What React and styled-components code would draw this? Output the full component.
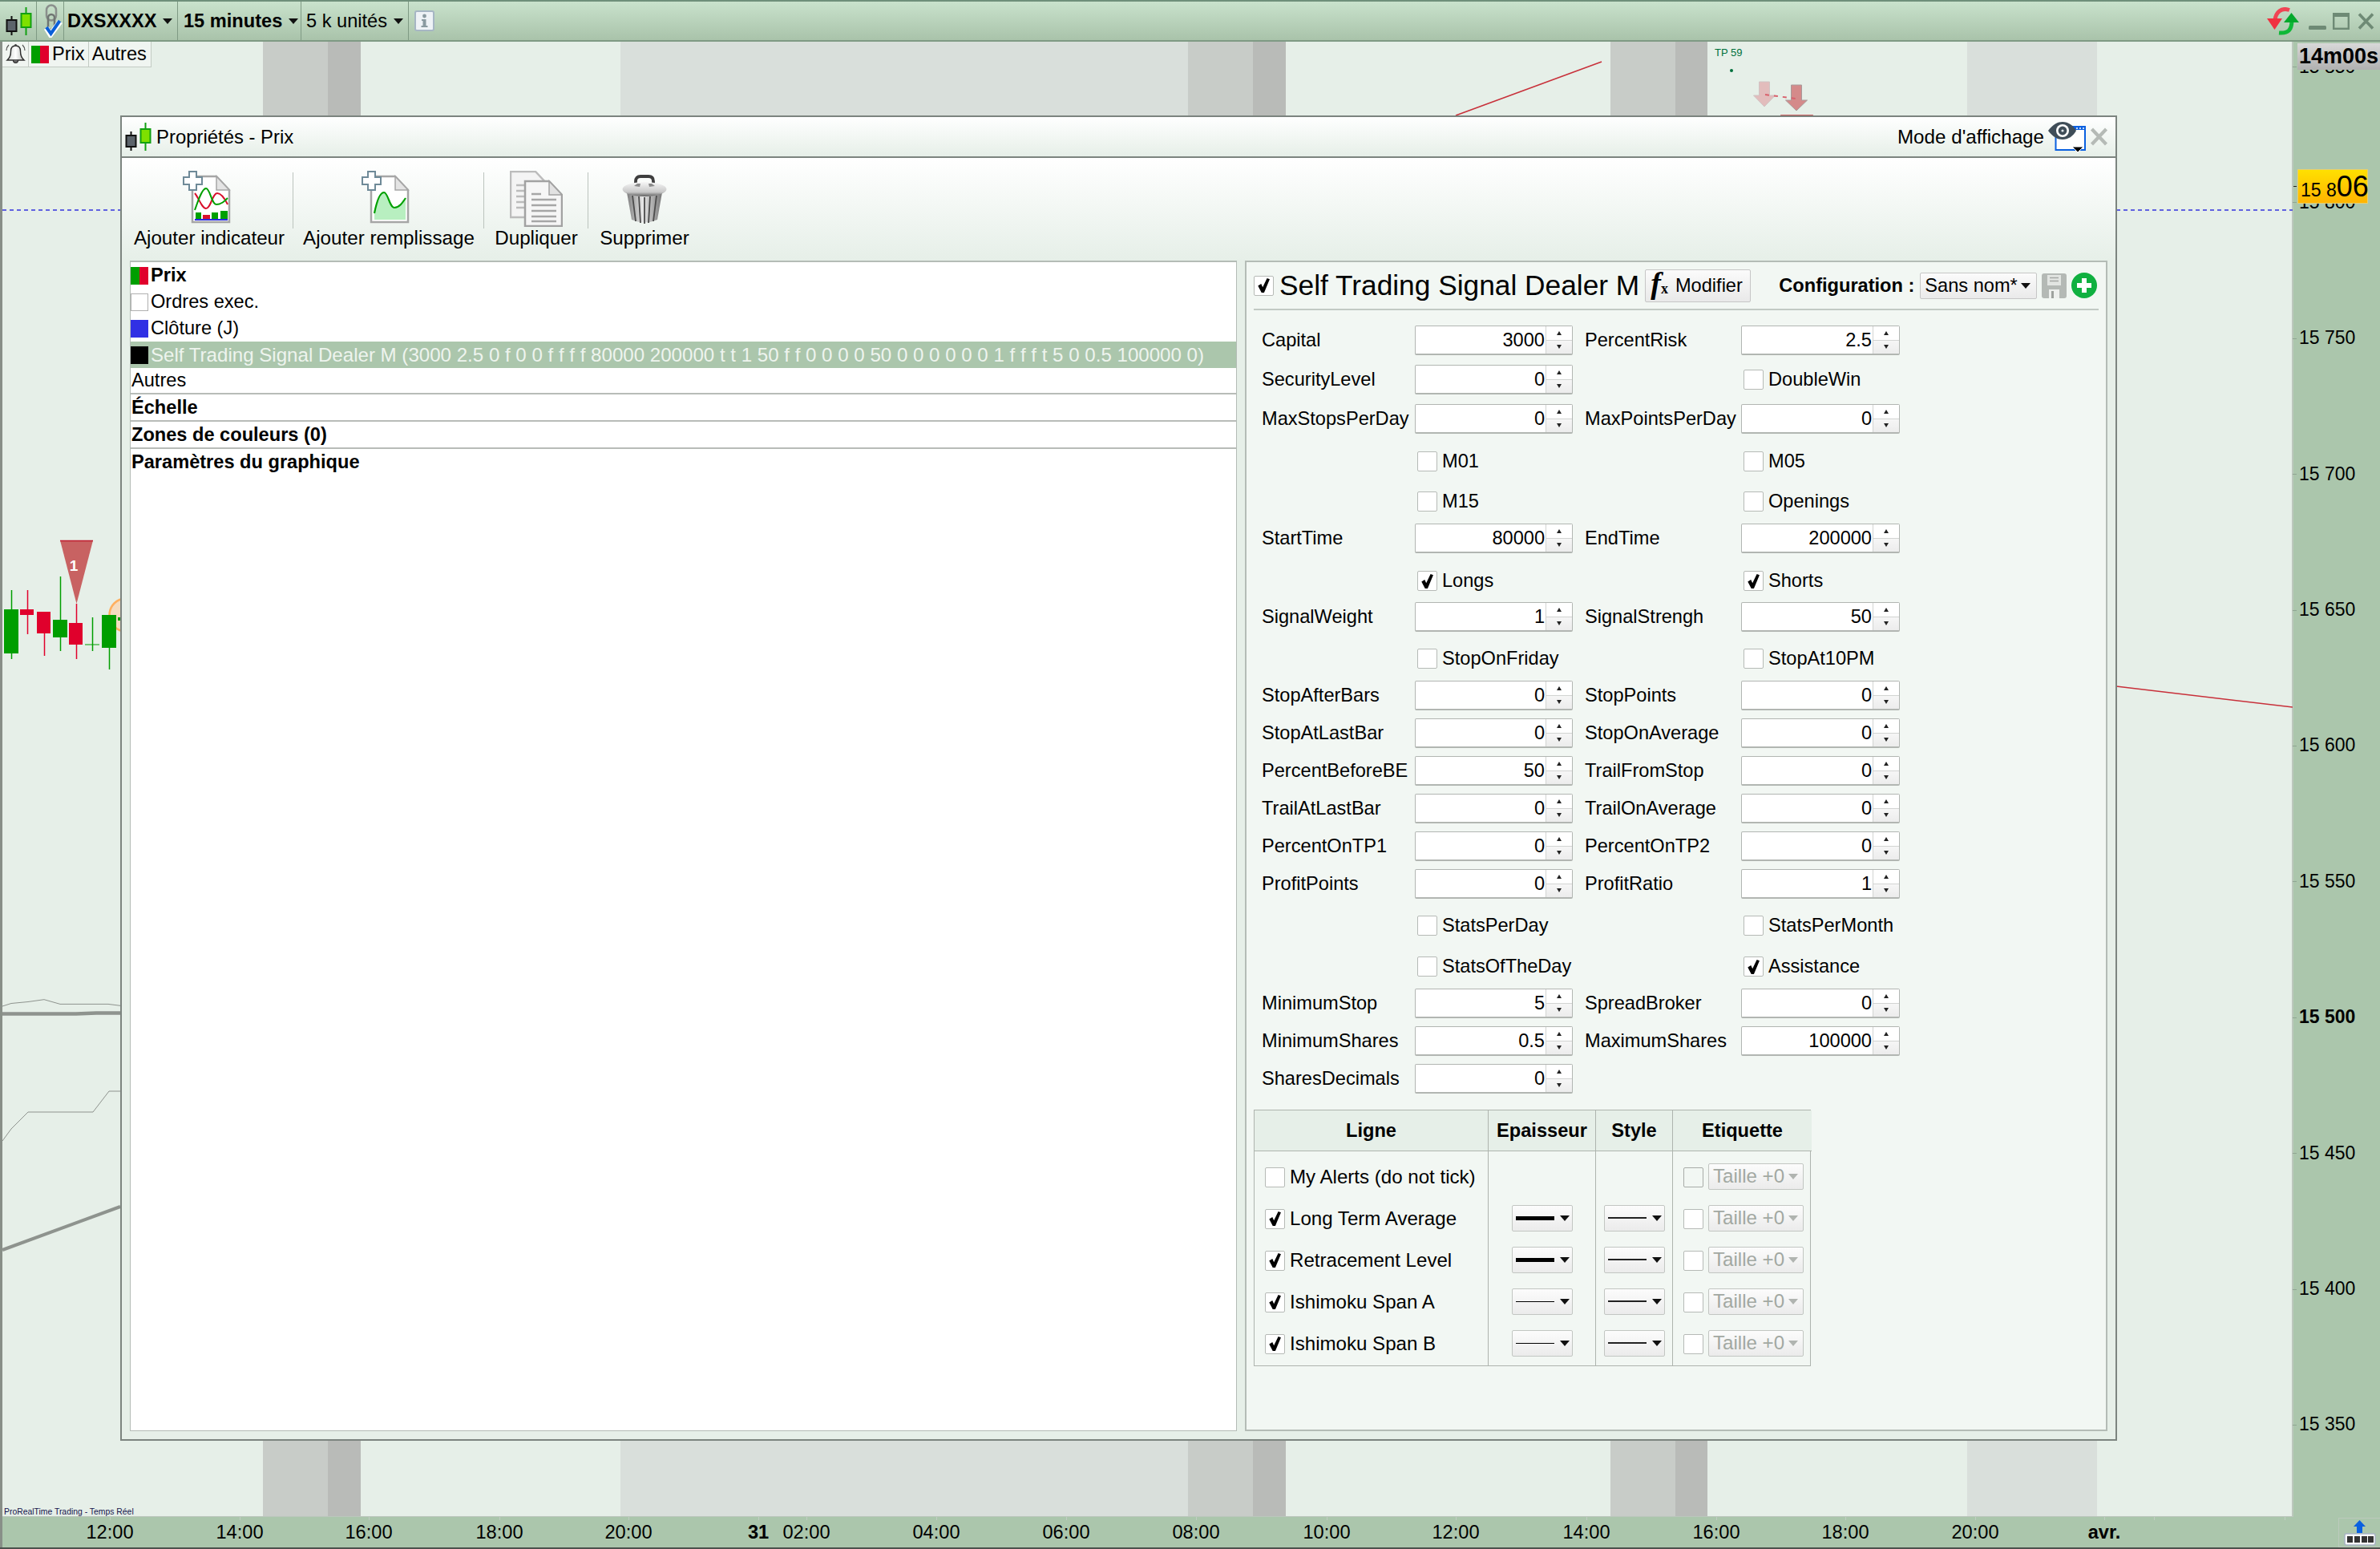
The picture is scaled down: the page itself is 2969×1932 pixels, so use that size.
import React from 'react';
import styled, {createGlobalStyle} from 'styled-components';

const GlobalStyle = createGlobalStyle`
  html, body {
    margin: 0;
    padding: 0;
    background: #e6efe8;
    overflow: hidden;
  }
  body {
    font-family: "Liberation Sans", Arial, sans-serif;
    font-size: 23.6px;
    color: #000;
  }
`;

const Page = styled.div`
  width: 2969px;
  height: 1932px;
  display: grid;
  grid-template-rows: 52px 1fr 40px;
  overflow: hidden;
`;

/* ---------- top toolbar ---------- */
const TopBar = styled.div`
  display: flex;
  align-items: stretch;
  box-sizing: border-box;
  border-top: 2px solid #6f8f7a;
  border-bottom: 2px solid #7f9a84;
  padding-left: 2px;
  background: linear-gradient(#c9e2cc, #a9c3aa);
`;

const TopSegment = styled.div`
  width: ${p => p.$w}px;
  box-sizing: border-box;
  display: flex;
  align-items: center;
  justify-content: ${p => (p.$center ? 'center' : 'flex-start')};
  padding-left: ${p => p.$pad || 0}px;
  border-right: 1px solid #7f9a84;
  font-weight: ${p => (p.$bold ? 700 : 400)};
  white-space: nowrap;
`;

const InfoSlot = styled.div`
  display: flex;
  align-items: center;
  padding-left: 7px;
`;

const WindowButtons = styled.div`
  margin-left: auto;
  display: flex;
  align-items: center;
  padding-right: 7px;
`;

const WindowGlyph = styled.svg`
  display: block;
  margin-left: ${p => p.$ml || 0}px;
`;

const Caret = styled.span`
  display: inline-block;
  width: 0;
  height: 0;
  flex: none;
  margin-left: ${p => p.$ml ?? 8}px;
  border-left: 6.5px solid transparent;
  border-right: 6.5px solid transparent;
  border-top: 7px solid ${p => p.$color || '#111'};
`;

/* ---------- chart ---------- */
const Main = styled.div`
  display: grid;
  grid-template-columns: 2860px 109px;
  min-height: 0;
`;

const Chart = styled.div`
  position: relative;
  overflow: hidden;
  background: #e6efe8;
`;

const ChartDrawing = styled.svg`
  position: absolute;
  left: 0;
  top: 0;
  display: block;
`;

const Legend = styled.div`
  position: absolute;
  left: 3px;
  top: 0;
  height: 31px;
  display: flex;
  background: #f0f5f1;
  border-right: 1px solid #c3cbc4;
  border-bottom: 1px solid #c3cbc4;
`;

const LegendCell = styled.div`
  display: flex;
  align-items: center;
  padding: 0 ${p => p.$pad ?? 5}px 0 ${p => p.$pl ?? 4}px;
  border-right: 1px solid #c3cbc4;
  &:last-child { border-right: 0; }
`;

const Swatch = styled.span`
  display: inline-block;
  flex: none;
  width: 22px;
  height: 22px;
  box-sizing: border-box;
  margin-right: ${p => p.$mr ?? 3}px;
  background: ${p => p.$bg};
  border: ${p => (p.$outlined ? '1px solid #b0b0b0' : '0')};
`;

const Credit = styled.div`
  position: absolute;
  left: 5px;
  top: 1827px;
  font-size: 10.4px;
  line-height: 14px;
  color: #14144c;
  white-space: nowrap;
`;

/* ---------- price scale ---------- */
const PriceAxis = styled.div`
  position: relative;
  overflow: hidden;
  background: #abc6ac;
  box-shadow: inset 1px 0 #bcc8bd;
`;

const PriceTicks = styled.div`
  margin-top: -53.7px;
`;

const PriceTick = styled.div`
  position: relative;
  height: 169.4px;
  display: flex;
  align-items: center;
  padding-left: 8px;
  font-size: 23px;
  font-weight: ${p => (p.$bold ? 700 : 400)};
  &::before {
    content: '';
    position: absolute;
    left: 0;
    top: 50%;
    width: 5px;
    height: 1px;
    background: #8fa592;
  }
`;

const TimerTag = styled.div`
  position: absolute;
  left: 6px;
  right: 0;
  top: 2px;
  height: 33px;
  display: flex;
  align-items: center;
  justify-content: center;
  font-size: 27px;
  font-weight: 700;
  white-space: nowrap;
  background: linear-gradient(#d8d8d8, #b0b0b0);
`;

const PriceTag = styled.div`
  position: absolute;
  left: 6px;
  top: 159px;
  width: 88px;
  height: 43px;
  box-sizing: border-box;
  display: flex;
  align-items: baseline;
  padding: 0 0 0 3px;
  line-height: 42px;
  white-space: nowrap;
  background: linear-gradient(#ffe000, #ffb400);
  border: 1px solid #e8d070;
  &::before {
    content: '';
    position: absolute;
    left: -6px;
    top: 20px;
    width: 4px;
    height: 1px;
    background: #222;
  }
`;

const PriceHead = styled.span`
  font-size: 23px;
`;

const PriceTail = styled.span`
  font-size: 36px;
`;

/* ---------- time scale ---------- */
const TimeAxis = styled.div`
  position: relative;
  box-sizing: border-box;
  background: #abc6ac;
  border-bottom: 2px solid #4c524d;
  box-shadow: inset 3px 0 #888f88;
`;

const TimeStamp = styled.div`
  position: absolute;
  left: ${p => p.$x}px;
  top: 19px;
  transform: translate(-50%, -50%);
  font-weight: ${p => (p.$bold ? 700 : 400)};
  white-space: nowrap;
`;

const TimeMark = styled.div`
  position: absolute;
  left: ${p => p.$x}px;
  top: 0;
  width: 1px;
  height: 4px;
  background: #c2cec3;
`;

const TrayButton = styled.div`
  position: absolute;
  right: 0;
  top: 1px;
  width: 52px;
  height: 37px;
  box-sizing: border-box;
  border: 1px solid #bccabc;
  border-right: 0;
  display: flex;
  justify-content: center;
`;

/* ---------- dialog ---------- */
const Dialog = styled.div`
  position: absolute;
  left: 150px;
  top: 92px;
  width: 2491px;
  height: 1653px;
  box-sizing: border-box;
  display: flex;
  flex-direction: column;
  border: 2px solid #7c847f;
  background: #e6efe8;
`;

const DialogTitle = styled.div`
  height: 51px;
  flex: none;
  box-sizing: border-box;
  display: flex;
  align-items: center;
  padding: 0 9px 0 3px;
  border-bottom: 2px solid #7c847f;
  background: linear-gradient(#fff, #e6efe8);
`;

const TitleText = styled.span`
  margin-left: 4px;
  font-size: 23.9px;
`;

const DisplayMode = styled.div`
  margin-left: auto;
  display: flex;
  align-items: center;
  gap: 5px;
  font-size: 24.2px;
`;

const ActionBar = styled.div`
  height: 128px;
  flex: none;
  box-sizing: border-box;
  display: flex;
  align-items: flex-start;
  padding: 16px 0 0 4px;
  background: linear-gradient(#fff, #e6efe8);
`;

const ActionButton = styled.div`
  width: ${p => p.$w}px;
  height: 96px;
  box-sizing: border-box;
  display: flex;
  flex-direction: column;
  align-items: center;
  position: relative;
  white-space: nowrap;
  font-size: 24.2px;
  &:not(:last-child)::after {
    content: '';
    position: absolute;
    right: 0;
    top: 2px;
    height: 70px;
    width: 1px;
    background: #bcc4be;
  }
`;

const ActionIcon = styled.svg`
  display: block;
  height: 70px;
  flex: none;
`;

const DialogBody = styled.div`
  flex: 1;
  min-height: 0;
  display: grid;
  grid-template-columns: 1381px 1076px;
  gap: 10px;
  padding: 0 10px 10px;
`;

/* left list */
const ListPanel = styled.div`
  box-sizing: border-box;
  border: solid #b4bcb6;
  border-width: 2px 1px 1px;
  background: #fff;
  overflow: hidden;
`;

const ListRow = styled.div`
  height: ${p => p.$h || 33}px;
  box-sizing: border-box;
  display: flex;
  align-items: center;
  padding-left: ${p => (p.$swatch ? 0 : 1)}px;
  white-space: nowrap;
  font-weight: ${p => (p.$bold ? 700 : 400)};
  font-size: ${p => (p.$selected ? 24.1 : 23.6)}px;
  color: ${p => (p.$selected ? '#eef4ee' : '#000')};
  background: ${p => (p.$selected ? '#abc6ac' : 'transparent')};
  border-bottom: ${p => (p.$line ? '2px solid #b8bcb8' : '0')};
`;

/* right form */
const ConfigPanel = styled.div`
  box-sizing: border-box;
  border: 2px solid #b4bcb6;
  background: #f2f7f3;
`;

const ConfigHeader = styled.div`
  height: 60px;
  box-sizing: border-box;
  margin: 0 9px;
  display: flex;
  align-items: center;
  border-bottom: 2px solid #c2cac4;
`;

const CheckBox = styled.span`
  display: inline-flex;
  align-items: center;
  justify-content: center;
  flex: none;
  width: 25px;
  height: 25px;
  box-sizing: border-box;
  background: ${p => (p.$off ? 'transparent' : '#fff')};
  border: 1px solid ${p => (p.$off ? '#a8aca8' : '#b6bab6')};
  border-radius: 2px;
`;

const IndicatorName = styled.span`
  margin-left: 7px;
  font-size: 35.3px;
  white-space: nowrap;
`;

const EditButton = styled.div`
  margin-left: 7px;
  width: 132px;
  height: 41px;
  box-sizing: border-box;
  display: flex;
  align-items: center;
  padding-left: 6px;
  background: linear-gradient(#fbfbfb, #e9e9e9);
  border: 1px solid #c6c6c6;
  border-radius: 2px;
`;

const FxMark = styled.span`
  font-family: "Liberation Serif", "Times New Roman", serif;
  font-style: italic;
  font-weight: 700;
  font-size: 38px;
  line-height: 30px;
  margin-right: 9px;
  white-space: nowrap;
`;

const FxSub = styled.span`
  font-size: 18px;
  font-style: normal;
`;

const ConfigLabel = styled.span`
  margin-left: 35px;
  font-weight: 700;
  white-space: nowrap;
`;

const ConfigSelect = styled.div`
  margin-left: 7px;
  width: 146px;
  height: 33px;
  box-sizing: border-box;
  display: flex;
  align-items: center;
  padding-left: 5px;
  white-space: nowrap;
  background: linear-gradient(#fbfbfb, #eaeaea);
  border: 1px solid #c6c6c6;
  border-radius: 2px;
`;

const HeaderIcon = styled.svg`
  display: block;
  flex: none;
  margin-left: 6px;
`;

const Form = styled.div`
  padding: 19px 0 0 19px;
`;

const FormRow = styled.div`
  display: grid;
  grid-template-columns: 191px 197px 15px 195px 198px;
  align-items: center;
  height: ${p => p.$h}px;
  margin-top: ${p => p.$mt}px;
`;

const FieldLabel = styled.span`
  white-space: nowrap;
`;

const SpinBox = styled.div`
  height: 37px;
  box-sizing: border-box;
  display: flex;
  background: #fff;
  border: 1px solid #b2b6b2;
  border-bottom-width: 2px;
  border-radius: 2px;
`;

const SpinValue = styled.div`
  flex: 1;
  display: flex;
  align-items: center;
  justify-content: flex-end;
  padding-right: 1px;
`;

const SpinButtons = styled.div`
  width: 32px;
  display: flex;
  flex-direction: column;
  border-left: 1px solid #d2d4d2;
`;

const SpinHalf = styled.div`
  flex: 1;
  display: flex;
  align-items: center;
  justify-content: center;
  background: ${p => (p.$down ? 'linear-gradient(#f6f6f6, #ececec)' : '#fff')};
  border-top: ${p => (p.$down ? '1px solid #d2d4d2' : '0')};
`;

const SpinArrow = styled.span`
  width: 0;
  height: 0;
  border-left: 3.5px solid transparent;
  border-right: 3.5px solid transparent;
  ${p => (p.$down ? 'border-top: 5px solid #222;' : 'border-bottom: 5px solid #222;')}
`;

const CheckField = styled.label`
  display: flex;
  align-items: center;
  padding-left: 3px;
  gap: 6px;
  white-space: nowrap;
`;

/* lines table */
const LineTable = styled.div`
  margin: 20px 0 0 9px;
  width: 695px;
  height: 320px;
  box-sizing: border-box;
  display: flex;
  border: 1px solid #aeb4ae;
  background: #f2f7f3;
`;

const LineColumn = styled.div`
  width: ${p => p.$w}px;
  flex: none;
  box-sizing: border-box;
  border-right: 1px solid #aeb4ae;
  &:last-child { border-right: 0; }
`;

const LineHead = styled.div`
  height: 51px;
  box-sizing: border-box;
  display: flex;
  align-items: center;
  justify-content: center;
  font-weight: 700;
  background: #e6efe8;
  border-bottom: 1px solid #aeb4ae;
  margin-bottom: 6px;
`;

const LineCell = styled.div`
  height: 52px;
  display: flex;
  align-items: center;
  justify-content: ${p => (p.$center ? 'center' : 'flex-start')};
  padding-left: ${p => p.$pl || 0}px;
  gap: 6px;
  white-space: nowrap;
  font-size: 24.1px;
`;

const DropBox = styled.div`
  position: relative;
  width: ${p => p.$w}px;
  height: 33px;
  box-sizing: border-box;
  display: flex;
  align-items: center;
  padding-left: ${p => p.$pl || 4}px;
  background: linear-gradient(#fcfcfc, #ebebeb);
  border: 1px solid #c2c6c2;
  border-radius: 2px;
  color: #a2a8a2;
  margin-top: -2px;
`;

const LineSample = styled.span`
  display: block;
  width: 48px;
  height: ${p => p.$t}px;
  background: ${p => p.$color || '#000'};
`;

const Tick = () => (
  <svg width="17" height="20" viewBox="0 0 15 18">
    <path d="M1 9.5 L4.6 7.3 L6.3 11 L11.2 1 L14.2 2 L7.9 17 L5 17 Z" fill="#000" />
  </svg>
);

const CandleIcon = () => (
  <svg width="36" height="37" viewBox="0 0 36 37" style={{display: 'block'}}>
    <line x1="8.5" y1="12" x2="8.5" y2="36" stroke="#111" strokeWidth="2" />
    <rect x="2.5" y="17" width="12" height="14" fill="#5c646b" stroke="#111" strokeWidth="2" />
    <line x1="26.5" y1="1" x2="26.5" y2="36" stroke="#12a012" strokeWidth="2" />
    <rect x="20.5" y="9" width="12" height="17" fill="#7fe000" stroke="#12a012" strokeWidth="2" />
  </svg>
);

const ChainIcon = () => (
  <svg width="25" height="42" viewBox="0 0 25 42" style={{display: 'block'}}>
    <rect x="5" y="1.5" width="12" height="19" rx="6" fill="none" stroke="#8a8f8c" strokeWidth="2.5" />
    <rect x="7" y="13" width="8" height="19" rx="4" fill="none" stroke="#6f7572" strokeWidth="2.5" />
    <path d="M5 30 L10 38 L22 22" fill="none" stroke="#fff" strokeWidth="7" />
    <path d="M5 29 L10.5 37 L21.5 21" fill="none" stroke="#0a5fd8" strokeWidth="4" />
  </svg>
);

const InfoIcon = () => (
  <svg width="25" height="26" viewBox="0 0 25 26" style={{display: 'block'}}>
    <rect x="1" y="1" width="23" height="24" rx="2" fill="#eef2f6" stroke="#a6b6c4" strokeWidth="2" />
    <circle cx="12.5" cy="7" r="2.4" fill="#8a9aa0" />
    <path d="M9 11 H14.5 V19 H16.5 V21 H8.5 V19 H10.5 V13 H9 Z" fill="#8a9aa0" />
  </svg>
);

const SyncIcon = () => (
  <WindowGlyph width="40" height="35" viewBox="0 0 40 35">
    <path d="M28 3.5 C18 0 11 6 10 16" fill="none" stroke="#f04454" strokeWidth="5" />
    <polygon points="0,14 19,14 9.5,28" fill="#f03040" />
    <path d="M31 16 C31 28 27 33 15 32" fill="none" stroke="#10b838" strokeWidth="5" />
    <polygon points="21,19 40,19 30.5,7" fill="#04a82c" />
  </WindowGlyph>
);

const BellIcon = () => (
  <svg width="29" height="27" viewBox="0 0 29 27" style={{display: 'block'}}>
    <defs>
      <linearGradient id="bellFill" x1="0" y1="0" x2="1" y2="0">
        <stop offset="0" stopColor="#d0d4d0" />
        <stop offset="0.5" stopColor="#fff" />
        <stop offset="1" stopColor="#b8bcb8" />
      </linearGradient>
    </defs>
    <path d="M14.5 3 C10 3 8.5 6 8.5 10 C8.5 15 7.5 18 4 21 H25 C21.5 18 20.5 15 20.5 10 C20.5 6 19 3 14.5 3 Z" fill="url(#bellFill)" stroke="#2c2c2c" strokeWidth="1.4" />
    <path d="M11.5 21 A3 3.5 0 0 0 17.5 21" fill="#666" stroke="#2c2c2c" strokeWidth="1.2" />
    <circle cx="14.5" cy="2.4" r="1.4" fill="#444" />
    <path d="M6 2 C4 4 3 6 3 9 M23 2 C25 4 26 6 26 9" fill="none" stroke="#555" strokeWidth="1.2" />
  </svg>
);

const EyeWindowIcon = () => (
  <svg width="47" height="38" viewBox="0 0 47 38" style={{display: 'block'}}>
    <rect x="9.5" y="6" width="36.5" height="29" fill="#fff" stroke="#0a60e0" strokeWidth="2" />
    <rect x="9.5" y="6" width="36.5" height="4" fill="#0a60e0" />
    <path d="M35 8 h2 M39 8 h2 M43 8 h2" stroke="#fff" strokeWidth="1.6" />
    <path d="M0 11 C6 3 12 0 18 0 C25 0 31 4 35 11 C31 18 25 22 18 22 C12 22 6 19 0 11 Z" fill="#3f4d58" />
    <circle cx="18" cy="11" r="8" fill="#fff" />
    <circle cx="18" cy="11" r="5.4" fill="#3f4d58" />
    <circle cx="18" cy="11" r="1.6" fill="#dfe6ea" />
    <polygon points="30,31 44,31 37,38" fill="#000" stroke="#fff" strokeWidth="1" />
  </svg>
);

const CloseIcon = () => (
  <svg width="23" height="23" viewBox="0 0 23 23" style={{display: 'block'}}>
    <path d="M2.5 2 L20.5 21 M20.5 2 L2.5 21" stroke="#b5bab6" strokeWidth="4.2" />
  </svg>
);

const DocShape = () => (
  <>
    <path d="M12 7 H42 L58 24 V64 H12 Z" fill="#fff" stroke="#a6a6a6" strokeWidth="2.5" />
    <path d="M42 7 V24 H58 Z" fill="#e4e4e4" stroke="#a6a6a6" strokeWidth="1.5" />
    <path d="M8 1 H17 V8 H24 V17 H17 V24 H8 V17 H1 V8 H8 Z" fill="#fff" stroke="#6f8a98" strokeWidth="2" />
  </>
);

const AddIndicatorIcon = () => (
  <ActionIcon width="67" viewBox="0 0 67 70">
    <DocShape />
    <path d="M15 28 C20 34 24 47 29 47 C35 47 37 28 43 28 C48 28 52 34 56 42" fill="none" stroke="#d8102c" strokeWidth="2" />
    <path d="M15 49 C19 38 24 22 29 22 C34 22 36 42 42 42 C48 42 52 38 56 34" fill="none" stroke="#00a000" strokeWidth="2" />
    <rect x="16" y="52" width="7" height="8" fill="#00a000" />
    <rect x="25" y="55" width="9" height="5" fill="#d8102c" />
    <rect x="36" y="52" width="8" height="8" fill="#00a000" />
    <rect x="47" y="50" width="9" height="10" fill="#00a000" />
    <rect x="15" y="60" width="41" height="2" fill="#2a2ae0" />
  </ActionIcon>
);

const AddFillIcon = () => (
  <ActionIcon width="68" viewBox="0 0 68 70">
    <DocShape />
    <path d="M16 53 C19 38 23 27 28 27 C33 27 35 46 41 46 C47 46 51 40 55 34 V61 H16 Z" fill="#b8efc0" />
    <path d="M16 53 C19 38 23 27 28 27 C33 27 35 46 41 46 C47 46 51 40 55 34" fill="none" stroke="#00a000" strokeWidth="2.2" />
  </ActionIcon>
);

const DuplicateIcon = () => (
  <ActionIcon width="66" viewBox="0 0 66 70">
    <path d="M1 1 H32 L47 17 V58 H1 Z" fill="#f4f4f4" stroke="#bcbcbc" strokeWidth="2.5" />
    <path d="M8 18 H18 M8 25 H18 M8 32 H18 M8 39 H18 M8 46 H18" stroke="#bcbcbc" strokeWidth="2.5" />
    <path d="M19 13 H49 L65 30 V69 H19 Z" fill="#f6f6f6" stroke="#a2a2a2" strokeWidth="2.5" />
    <path d="M49 13 V30 H65 Z" fill="#e2e2e2" stroke="#a2a2a2" strokeWidth="1.5" />
    <path d="M27 29 H39 M27 36 H58 M27 43 H58 M27 50 H58 M27 57 H58 M27 63 H58" stroke="#a6a6a6" strokeWidth="2.5" />
  </ActionIcon>
);

const TrashIcon = () => (
  <ActionIcon width="56" viewBox="0 -5 56 70">
    <defs>
      <linearGradient id="trashBody" x1="0" y1="0" x2="1" y2="0">
        <stop offset="0" stopColor="#7c7c7c" />
        <stop offset="0.45" stopColor="#e8e8e8" />
        <stop offset="1" stopColor="#767676" />
      </linearGradient>
      <linearGradient id="trashLid" x1="0" y1="0" x2="0" y2="1">
        <stop offset="0" stopColor="#f6f6f6" />
        <stop offset="0.7" stopColor="#c8c8c8" />
        <stop offset="1" stopColor="#5e5e5e" />
      </linearGradient>
    </defs>
    <path d="M17 15 V8 Q17 2 23 2 H33 Q39 2 39 8 V15" fill="none" stroke="#3e3e3e" strokeWidth="3.8" />
    <path d="M6 22 L12 56 Q28 63 44 56 L50 22 Z" fill="url(#trashBody)" />
    <path d="M13 26 L17 58 M21 27 L23 60 M28 28 V61 M35 27 L33 60 M43 26 L39 58" stroke="#4c4c4c" strokeWidth="1.8" />
    <ellipse cx="28" cy="18" rx="27.5" ry="9" fill="url(#trashLid)" />
    <path d="M15 14 l4 -3 h4 l-1 4 Z M41 14 l-4 -3 h-4 l1 4 Z" fill="#8a8a8a" />
  </ActionIcon>
);

const SaveIcon = () => (
  <HeaderIcon width="31" height="31" viewBox="0 0 31 31">
    <rect x="0" y="0" width="31" height="31" rx="3" fill="#b4b9b5" />
    <rect x="7" y="2" width="17" height="13" fill="#e2e5e2" />
    <path d="M10 5.5 H21 M10 9.5 H21" stroke="#a4a8a4" strokeWidth="1.6" />
    <rect x="9" y="20" width="13" height="11" fill="#eef0ee" />
    <rect x="12" y="22" width="3" height="9" fill="#9ea29e" />
  </HeaderIcon>
);

const PlusIcon = () => (
  <HeaderIcon width="32" height="32" viewBox="0 0 32 32">
    <circle cx="16" cy="16" r="16" fill="#10b040" />
    <path d="M16 7 V25 M7 16 H25" stroke="#fff" strokeWidth="6" />
  </HeaderIcon>
);

const TrayIcon = () => (
  <svg width="40" height="32" viewBox="0 0 40 32" style={{display: 'block', marginTop: '2px'}}>
    <polygon points="19.5,0 27,8 23,8 23,16 16,16 16,8 12,8" fill="#0a60e0" />
    <rect x="1" y="17" width="38" height="14" rx="2" fill="#fff" stroke="#a8b4c4" strokeWidth="1.6" />
    <rect x="4" y="20" width="7" height="8" fill="#333" />
    <rect x="13" y="20" width="7" height="8" fill="#333" />
    <rect x="22" y="20" width="7" height="8" fill="#333" />
    <rect x="30" y="20" width="7" height="8" fill="#333" />
  </svg>
);

const bands = [
  [328, 81, '#c8ccc8'], [409, 41, '#b9bbb8'],
  [774, 708, '#d9dfdb'],
  [1482, 81, '#c8ccc8'], [1563, 41, '#b9bbb8'],
  [2009, 81, '#c8ccc8'], [2090, 40, '#b9bbb8'],
  [2454, 162, '#d9dfdb'],
];

// x of wick, wick top, wick bottom, body left, body right, body top, body bottom, colour
const candles = [
  [14.5, 736, 822, 5, 23, 760, 815, '#009e00'],
  [34.5, 736, 791, 25, 42, 760, 767, '#e0002c'],
  [55.5, 763, 818, 46, 63, 763, 790, '#e0002c'],
  [75.5, 719, 812, 66, 84, 773, 795, '#009e00'],
  [95.5, 753, 822, 86, 103, 777, 804, '#e0002c'],
  [115.5, 770, 812, 106, 124, 803.5, 804.5, '#009e00'],
  [136.5, 767, 835, 127, 145, 767, 808, '#009e00'],
];

const ChartArt = () => (
  <ChartDrawing width="2860" height="1840" viewBox="0 52 2860 1840">
    {bands.map(([x, w, c]) => <rect key={x} x={x} y="52" width={w} height="1840" fill={c} />)}
    <rect x="0" y="52" width="3" height="1840" fill="#888f88" />
    <rect x="2859" y="52" width="1" height="1840" fill="#bcc8bd" />
    <rect x="3" y="1891" width="2857" height="1" fill="#bcc6bd" />

    <line x1="3" y1="262" x2="2860" y2="262" stroke="#3333dd" strokeWidth="1.5" strokeDasharray="5 4" />
    <line x1="1816" y1="144" x2="1998" y2="77" stroke="#c8303a" strokeWidth="1.6" />
    <line x1="2640" y1="856" x2="2860" y2="882" stroke="#c8303a" strokeWidth="1.6" />

    <text x="2139" y="70" fontFamily="Liberation Sans" fontSize="13" fill="#00703c">TP 59</text>
    <circle cx="2160" cy="88" r="2" fill="#00703c" />
    <path d="M2194.5 102 H2207.5 V119 H2214.5 L2201 133 L2187.5 119 H2194.5 Z" fill="#e2bcbc" stroke="#d0c4c4" />
    <path d="M2234.5 106 H2247.5 V125 H2254.5 L2241 138 L2227.5 125 H2234.5 Z" fill="#d48a8a" stroke="#a89a9a" />
    <line x1="2202" y1="118" x2="2240" y2="123" stroke="#d8606c" strokeWidth="2" strokeDasharray="5 6" />
    <polygon points="2221,143 2262,143 2261,146 2222,146" fill="#cc6060" />

    <circle cx="157" cy="767" r="20.5" fill="#f5dcc0" stroke="#ffb060" strokeWidth="2.5" />
    {candles.map(([wx, wt, wb, bl, br, bt, bb, c]) => (
      <g key={wx}>
        <line x1={wx} y1={wt} x2={wx} y2={wb} stroke={c} strokeWidth="1.5" />
        <rect x={bl} y={bt} width={br - bl} height={bb - bt} fill={c} />
      </g>
    ))}
    <rect x="147" y="770" width="4" height="4" fill="#009e00" />
    <polygon points="75,674 116,674 95.5,753" fill="#c86262" />
    <line x1="75" y1="674.5" x2="116" y2="674.5" stroke="#c01c30" strokeWidth="1.4" />
    <text x="92" y="712" textAnchor="middle" fontFamily="Liberation Sans" fontSize="19" fontWeight="700" fill="#fff">1</text>

    <polyline points="3,1255 14,1251.5 35,1249.5 55,1246.7 75,1252.4 135,1252.4 150,1254.3" fill="none" stroke="#8e938e" strokeWidth="1" />
    <polyline points="3,1264.5 95,1264.5 120,1263.5 150,1263.5" fill="none" stroke="#8e938e" strokeWidth="4.5" />
    <polyline points="3,1423 14,1408 35,1387 116,1387 136,1361 150,1361" fill="none" stroke="#8e938e" strokeWidth="1" />
    <line x1="3" y1="1559" x2="150" y2="1505" stroke="#8e938e" strokeWidth="4" />
  </ChartDrawing>
);

const prices = ['15 850', '15 800', '15 750', '15 700', '15 650', '15 600', '15 550', '15 500', '15 450', '15 400', '15 350'];

const times = [
  [137, '12:00'], [299, '14:00'], [460, '16:00'], [623, '18:00'], [784, '20:00'],
  [946, '31', true], [1006, '02:00'], [1168, '04:00'], [1330, '06:00'], [1492, '08:00'],
  [1655, '10:00'], [1816, '12:00'], [1979, '14:00'], [2141, '16:00'], [2302, '18:00'],
  [2464, '20:00'], [2625, 'avr.', true],
];

const num = (label, value) => ({label, value});
const chk = (label, on) => ({label, check: true, on});

const formRows = [
  [0, num('Capital', '3000'), num('PercentRisk', '2.5')],
  [12, num('SecurityLevel', '0'), chk('DoubleWin')],
  [12, num('MaxStopsPerDay', '0'), num('MaxPointsPerDay', '0')],
  [21, chk('M01'), chk('M05')],
  [25, chk('M15'), chk('Openings')],
  [16, num('StartTime', '80000'), num('EndTime', '200000')],
  [21, chk('Longs', true), chk('Shorts', true)],
  [15, num('SignalWeight', '1'), num('SignalStrengh', '50')],
  [20, chk('StopOnFriday'), chk('StopAt10PM')],
  [16, num('StopAfterBars', '0'), num('StopPoints', '0')],
  [10, num('StopAtLastBar', '0'), num('StopOnAverage', '0')],
  [10, num('PercentBeforeBE', '50'), num('TrailFromStop', '0')],
  [10, num('TrailAtLastBar', '0'), num('TrailOnAverage', '0')],
  [10, num('PercentOnTP1', '0'), num('PercentOnTP2', '0')],
  [10, num('ProfitPoints', '0'), num('ProfitRatio', '1')],
  [20, chk('StatsPerDay'), chk('StatsPerMonth')],
  [26, chk('StatsOfTheDay'), chk('Assistance', true)],
  [16, num('MinimumStop', '5'), num('SpreadBroker', '0')],
  [10, num('MinimumShares', '0.5'), num('MaximumShares', '100000')],
  [10, num('SharesDecimals', '0'), null],
];

const lines = [
  {name: 'My Alerts (do not tick)'},
  {name: 'Long Term Average', on: true, thick: 5},
  {name: 'Retracement Level', on: true, thick: 5},
  {name: 'Ishimoku Span A', on: true, thick: 1},
  {name: 'Ishimoku Span B', on: true, thick: 1},
];

function FormField({item}) {
  if (!item) return <><span /><span /></>;
  if (item.check) {
    return (
      <>
        <span />
        <CheckField>
          <CheckBox>{item.on && <Tick />}</CheckBox>
          {item.label}
        </CheckField>
      </>
    );
  }
  return (
    <>
      <FieldLabel>{item.label}</FieldLabel>
      <SpinBox>
        <SpinValue>{item.value}</SpinValue>
        <SpinButtons>
          <SpinHalf><SpinArrow /></SpinHalf>
          <SpinHalf $down><SpinArrow $down /></SpinHalf>
        </SpinButtons>
      </SpinBox>
    </>
  );
}

function App() {
  return (
    <Page>
      <GlobalStyle />
      <TopBar>
        <TopSegment $w={44} $pad={4}><CandleIcon /></TopSegment>
        <TopSegment $w={34} $pad={7}><ChainIcon /></TopSegment>
        <TopSegment $w={142} $pad={4} $bold>DXSXXXX<Caret /></TopSegment>
        <TopSegment $w={154} $pad={7} $bold>15 minutes<Caret /></TopSegment>
        <TopSegment $w={134} $pad={6}>5 k unités<Caret /></TopSegment>
        <InfoSlot><InfoIcon /></InfoSlot>
        <WindowButtons>
          <SyncIcon />
          <WindowGlyph $ml={12} width="22" height="21" viewBox="0 0 22 21">
            <rect x="0" y="16" width="22" height="5" rx="1.5" fill="#6e8a75" />
          </WindowGlyph>
          <WindowGlyph $ml={8} width="21" height="21" viewBox="0 0 21 21">
            <rect x="1.2" y="1.2" width="18.6" height="18.6" fill="none" stroke="#6e8a75" strokeWidth="2.4" />
            <rect x="1" y="1" width="19" height="4" fill="#6e8a75" />
          </WindowGlyph>
          <WindowGlyph $ml={10} width="21" height="21" viewBox="0 0 21 21">
            <path d="M2 1.5 L19 19.5 M19 1.5 L2 19.5" stroke="#6e8a75" strokeWidth="3.6" />
          </WindowGlyph>
        </WindowButtons>
      </TopBar>

      <Main>
        <Chart>
          <ChartArt />
          <Legend>
            <LegendCell $pl={2} $pad={1}><BellIcon /></LegendCell>
            <LegendCell $pl={3} $pad={4}>
              <Swatch $mr={4} $bg="linear-gradient(90deg, #009e00 50%, #e0002c 50%)" />Prix
            </LegendCell>
            <LegendCell>Autres</LegendCell>
          </Legend>
          <Credit>ProRealTime Trading - Temps Réel</Credit>

          <Dialog>
            <DialogTitle>
              <CandleIcon />
              <TitleText>Propriétés - Prix</TitleText>
              <DisplayMode>
                Mode d'affichage
                <EyeWindowIcon />
                <CloseIcon />
              </DisplayMode>
            </DialogTitle>

            <ActionBar>
              <ActionButton $w={210}>
                <AddIndicatorIcon />
                Ajouter indicateur
              </ActionButton>
              <ActionButton $w={238}>
                <AddFillIcon />
                Ajouter remplissage
              </ActionButton>
              <ActionButton $w={130}>
                <DuplicateIcon />
                Dupliquer
              </ActionButton>
              <ActionButton $w={140}>
                <TrashIcon />
                Supprimer
              </ActionButton>
            </ActionBar>

            <DialogBody>
              <ListPanel>
                <ListRow $swatch $bold>
                  <Swatch $bg="linear-gradient(90deg, #009e00 50%, #e0002c 50%)" />Prix
                </ListRow>
                <ListRow $swatch><Swatch $bg="#fff" $outlined />Ordres exec.</ListRow>
                <ListRow $swatch><Swatch $bg="#3030e4" />Clôture (J)</ListRow>
                <ListRow $swatch $selected>
                  <Swatch $bg="#000" />
                  Self Trading Signal Dealer M (3000 2.5 0 f 0 0 f f f f 80000 200000 t t 1 50 f f 0 0 0 0 50 0 0 0 0 0 0 1 f f f t 5 0 0.5 100000 0)
                </ListRow>
                <ListRow $line>Autres</ListRow>
                <ListRow $line $h={34} $bold>Échelle</ListRow>
                <ListRow $line $h={34} $bold>Zones de couleurs (0)</ListRow>
                <ListRow $bold>Paramètres du graphique</ListRow>
              </ListPanel>

              <ConfigPanel>
                <ConfigHeader>
                  <CheckBox><Tick /></CheckBox>
                  <IndicatorName>Self Trading Signal Dealer M</IndicatorName>
                  <EditButton>
                    <FxMark>f<FxSub>x</FxSub></FxMark>
                    Modifier
                  </EditButton>
                  <ConfigLabel>Configuration :</ConfigLabel>
                  <ConfigSelect>Sans nom*<Caret $ml={4} /></ConfigSelect>
                  <SaveIcon />
                  <PlusIcon />
                </ConfigHeader>

                <Form>
                  {formRows.map(([mt, left, right]) => (
                    <FormRow key={left.label} $mt={mt} $h={left.check && right.check ? 25 : 37}>
                      <FormField item={left} />
                      <span />
                      <FormField item={right} />
                    </FormRow>
                  ))}
                </Form>

                <LineTable>
                  <LineColumn $w={292}>
                    <LineHead>Ligne</LineHead>
                    {lines.map(l => (
                      <LineCell key={l.name} $pl={13}>
                        <CheckBox>{l.on && <Tick />}</CheckBox>
                        {l.name}
                      </LineCell>
                    ))}
                  </LineColumn>
                  <LineColumn $w={134}>
                    <LineHead>Epaisseur</LineHead>
                    {lines.map(l => (
                      <LineCell key={l.name} $center>
                        {l.thick && (
                          <DropBox $w={76}>
                            <LineSample $t={l.thick} />
                            <Caret $ml={7} />
                          </DropBox>
                        )}
                      </LineCell>
                    ))}
                  </LineColumn>
                  <LineColumn $w={96}>
                    <LineHead>Style</LineHead>
                    {lines.map(l => (
                      <LineCell key={l.name} $center>
                        {l.thick && (
                          <DropBox $w={76}>
                            <LineSample $t={2} $color="#222" />
                            <Caret $ml={7} />
                          </DropBox>
                        )}
                      </LineCell>
                    ))}
                  </LineColumn>
                  <LineColumn $w={173}>
                    <LineHead>Etiquette</LineHead>
                    {lines.map((l, i) => (
                      <LineCell key={l.name} $pl={13}>
                        <CheckBox $off={i === 0} />
                        <DropBox $w={119} $pl={5}>
                          Taille +0
                          <Caret $ml={5} $color="#b0b4b0" />
                        </DropBox>
                      </LineCell>
                    ))}
                  </LineColumn>
                </LineTable>
              </ConfigPanel>
            </DialogBody>
          </Dialog>
        </Chart>

        <PriceAxis>
          <PriceTicks>
            {prices.map(p => <PriceTick key={p} $bold={p === '15 500'}>{p}</PriceTick>)}
          </PriceTicks>
          <TimerTag>14m00s</TimerTag>
          <PriceTag>
            <PriceHead>15 8</PriceHead>
            <PriceTail>06</PriceTail>
          </PriceTag>
        </PriceAxis>
      </Main>

      <TimeAxis>
        {[...times.map(t => t[0]), 2687, 2850].map(x => <TimeMark key={x} $x={x} />)}
        {times.map(([x, label, bold]) => (
          <TimeStamp key={x} $x={x} $bold={bold}>{label}</TimeStamp>
        ))}
        <TrayButton><TrayIcon /></TrayButton>
      </TimeAxis>
    </Page>
  );
}

export default App;
